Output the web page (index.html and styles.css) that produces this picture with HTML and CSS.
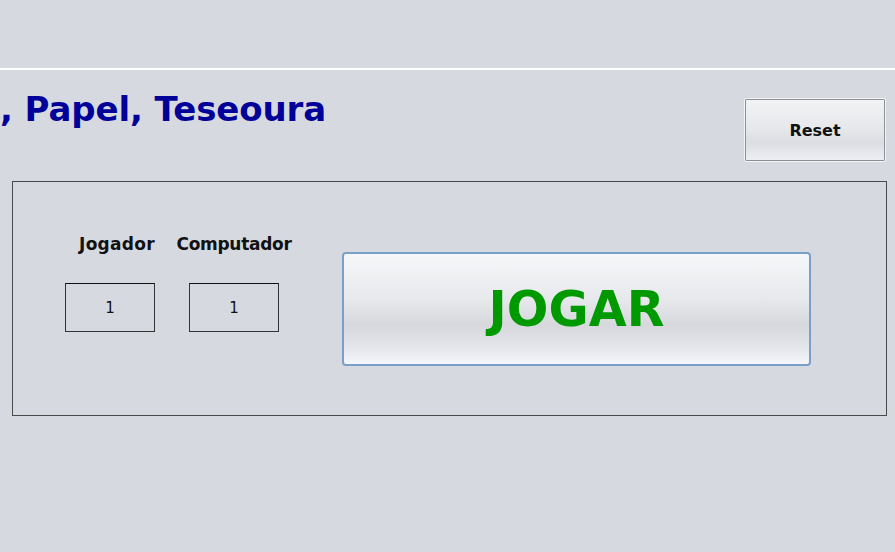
FILE: index.html
```html
<!DOCTYPE html>
<html>
<head>
<meta charset="utf-8">
<link rel="stylesheet" href="styles.css">
</head>
<body>
<div class="topbar"></div>
<div class="header">
  <h1 class="title">, Papel, Teseoura</h1>
  <button class="reset">Reset</button>
</div>
<div class="panel">
  <div class="scores">
    <div class="col col-left">
      <div class="label">Jogador</div>
      <div class="box">1</div>
    </div>
    <div class="col col-center">
      <div class="label">Computador</div>
      <div class="box">1</div>
    </div>
  </div>
  <button class="play">JOGAR</button>
</div>
</body>
</html>
```

FILE: styles.css
```css
html, body {
  margin: 0;
  padding: 0;
  background: #d7d9e0;
  width: 895px;
  height: 552px;
  overflow: hidden;
  font-family: "DejaVu Sans", Verdana, sans-serif;
}
.topbar {
  height: 68px;
  border-bottom: 2px solid #ffffff;
}
.header {
  display: flex;
  justify-content: space-between;
  align-items: flex-start;
  height: 109px;
}
.title {
  margin: 0;
  padding-top: 19px;
  font-size: 34px;
  font-weight: bold;
  color: #010199;
  line-height: 40px;
  letter-spacing: -0.1px;
  white-space: nowrap;
}
.reset {
  margin: 28px 9px 0 0;
  width: 142px;
  height: 64px;
  border: 1px solid #f4f5f7;
  outline: 1px solid #8d8f94;
  outline-offset: -2px;
  border-radius: 2px;
  background: linear-gradient(#f2f3f5 0%, #e6e7ea 50%, #dcdde2 70%, #eef0f5 100%);
  font-family: "DejaVu Sans", Verdana, sans-serif;
  font-weight: bold;
  font-size: 16px;
  color: #111;
  padding: 0;
}
.panel {
  margin: 2px 8px 0 12px;
  height: 233px;
  border: 1px solid #4a4a4d;
  display: flex;
  align-items: flex-start;
}
.scores {
  display: flex;
  gap: 34px;
  margin: 52px 0 0 52px;
}
.col {
  width: 90px;
  display: flex;
  flex-direction: column;
  gap: 29px;
}
.col-left { align-items: flex-end; }
.col-center { align-items: center; }
.label {
  font-weight: bold;
  font-size: 17px;
  letter-spacing: -0.3px;
  line-height: 20px;
  color: #111;
  white-space: nowrap;
}
.col-left .label { letter-spacing: 0.3px; }
.box {
  box-sizing: border-box;
  width: 90px;
  height: 49px;
  border: 1px solid #333;
  border-top-color: #111;
  display: flex;
  align-items: center;
  justify-content: center;
  font-size: 15px;
  color: #111;
}
.play {
  margin: 70px 0 0 63px;
  width: 469px;
  height: 114px;
  border: 2px solid #7aa0c8;
  border-radius: 4px;
  background: linear-gradient(#f6f7f9 0%, #e8e9ec 40%, #d6d8dd 65%, #e6e8ee 88%, #f6f7fb 100%);
  color: #009a00;
  font-family: "DejaVu Sans", Verdana, sans-serif;
  font-weight: bold;
  font-size: 49px;
  padding: 0;
}
```
